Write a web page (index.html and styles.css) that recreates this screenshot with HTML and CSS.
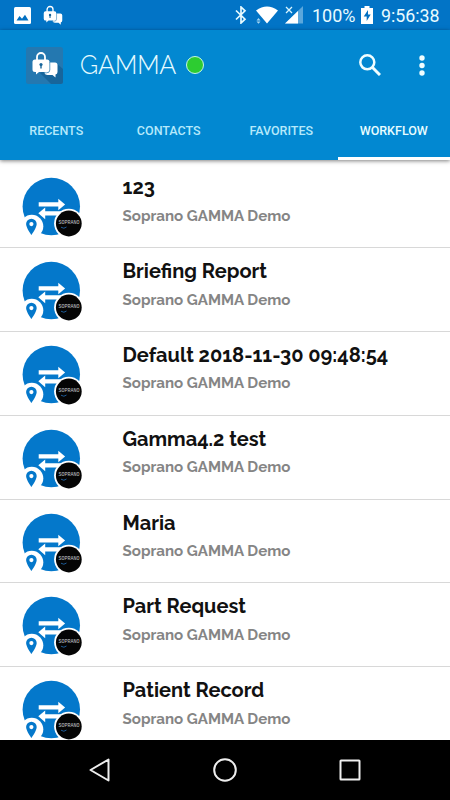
FILE: index.html
```html
<!DOCTYPE html>
<html lang="en">
<head>
  <meta charset="UTF-8">
  <meta name="viewport" content="width=device-width, initial-scale=1.0">
  <title>GAMMA</title>
  <link rel="stylesheet" href="styles.css">
</head>
<body>
  <svg class="symbols">
    <symbol id="lock-chat" viewBox="0 0 26 27">
      <path d="M5 10V6a4 4 0 0 1 8 0v4" fill="none" stroke="#fff" stroke-width="1.8"/>
      <path d="M15 11.500h8q2.500 0 2.500 2.500v7q0 2-2 2.500v3l-3-2.500h-5q-2.500 0-3-2z" fill="#fff"/>
      <path d="M3 8.500h12q2.500 0 2.500 2.500v7.500q0 2.500-2.500 2.500H7l-3 2.500V21H3q-2.500 0-2.500-2.500V11Q.500 8.500 3 8.500z" fill="#fff"/>
      <path d="M17.800 11v8q0 2.800-3 2.800h-3" fill="none" stroke="#3583b5" stroke-width=".8"/>
      <circle cx="9" cy="13.500" r="1.600" fill="#17659b"/>
      <path d="M8.300 14h1.400v3.500H8.300z" fill="#17659b"/>
    </symbol>
    <symbol id="workflow" viewBox="0 0 64 64">
      <circle cx="31.300" cy="30.500" r="28.700" fill="#0478cb"/>
      <path d="M18.700 26.200h19.600v-3.500l6.800 5.700-6.800 5.800v-3.600H18.700z" fill="#fff"/>
      <path d="M45 35.200H25.200v-3.800l-6.900 5.900 6.900 5.900v-3.700H45z" fill="#fff"/>
      <circle cx="11.800" cy="50.300" r="11.500" fill="#fff"/>
      <path fill-rule="evenodd" d="M11.400 42.800a5.300 5.300 0 0 1 5.300 5.300c0 3.800-5.300 11-5.300 11s-5.300-7.200-5.300-11a5.300 5.300 0 0 1 5.300-5.300zm0 3.200a2.100 2.100 0 1 0 0 4.200 2.100 2.100 0 0 0 0-4.200z" fill="#0478cb"/>
      <circle cx="48.800" cy="47.500" r="14.700" fill="#fff"/>
      <circle cx="48.800" cy="47.500" r="12.900" fill="#050505"/>
      <path d="M41 51.200q3 2.200 5.500-.2" fill="none" stroke="#1d5b96" stroke-width="1"/>
    </symbol>
  </svg>

  <div class="status-bar">
    <svg class="picture" viewBox="0 0 17 17">
      <rect width="17" height="17" rx="1.500" fill="#fff"/>
      <path d="M2.500 13.500l3-4.500 2.500 2.800 3-4 3.500 5.700z" fill="#0270c2"/>
    </svg>
    <svg class="lock"><use href="#lock-chat"/></svg>
    <svg class="bluetooth" viewBox="0 0 12 18">
      <path d="M1 4.500l9 8.700L6 17V1l4 3.800-9 8.700" fill="none" stroke="#e8fbff" stroke-width="1.700"/>
    </svg>
    <svg class="wifi" viewBox="0 0 22 18">
      <path d="M0 4.500Q11-3.500 22 4.500L11 17.500z" fill="#fff"/>
      <path d="M.500 14.500L2.500 12l2 2.500zM.500 15.500h4l-2 2.200z" fill="#a9d8f2"/>
    </svg>
    <svg class="signal" viewBox="0 0 18 18">
      <path d="M18 0v17.500H0z" fill="#5ba7dc"/>
      <path d="M13 5v12.500H0z" fill="#fff"/>
      <path d="M1 1l6 6M7 1L1 7" stroke="#d8f5ff" stroke-width="1.300"/>
    </svg>
    <span class="percent">100%</span>
    <svg class="battery" viewBox="0 0 12 18">
      <path d="M3.500 0h5v2H12v16H0V2h3.500z" fill="#fff"/>
      <path d="M7 4L2.700 10.500h3V15l4-6.500H7z" fill="#0270c2"/>
    </svg>
    <span class="clock">9:56:38</span>
  </div>

  <header class="header">
    <div class="toolbar">
      <svg class="logo" viewBox="0 0 37 37">
        <rect width="37" height="37" rx="2.500" fill="#2478b0"/>
        <path d="M14 26l11 11h9.500q2.500 0 2.500-2.500V22l-7-6z" fill="#17659b"/>
        <use href="#lock-chat" x="6" y="4" width="26" height="27"/>
      </svg>
      <h1>GAMMA</h1>
      <span class="online"></span>
      <svg class="search" viewBox="0 0 22 22">
        <circle cx="8.300" cy="8.300" r="7" fill="none" stroke="#effdff" stroke-width="2.500"/>
        <path d="M13.500 13.500l7.500 7.500" stroke="#effdff" stroke-width="3"/>
      </svg>
      <svg class="more" viewBox="0 0 6 21">
        <circle cx="3" cy="3" r="2.700" fill="#effdff"/>
        <circle cx="3" cy="10.500" r="2.700" fill="#effdff"/>
        <circle cx="3" cy="18" r="2.700" fill="#effdff"/>
      </svg>
    </div>
    <nav class="tabs">
      <a class="tab">RECENTS</a>
      <a class="tab">CONTACTS</a>
      <a class="tab">FAVORITES</a>
      <a class="tab active">WORKFLOW</a>
    </nav>
  </header>

  <main class="list">
    <div class="row">
      <div class="avatar"><svg><use href="#workflow"/></svg><span class="brand">SOPRANO</span></div>
      <div class="info"><h2>123</h2><p>Soprano GAMMA Demo</p></div>
    </div>
    <div class="row">
      <div class="avatar"><svg><use href="#workflow"/></svg><span class="brand">SOPRANO</span></div>
      <div class="info"><h2>Briefing Report</h2><p>Soprano GAMMA Demo</p></div>
    </div>
    <div class="row">
      <div class="avatar"><svg><use href="#workflow"/></svg><span class="brand">SOPRANO</span></div>
      <div class="info"><h2>Default 2018-11-30 09:48:54</h2><p>Soprano GAMMA Demo</p></div>
    </div>
    <div class="row">
      <div class="avatar"><svg><use href="#workflow"/></svg><span class="brand">SOPRANO</span></div>
      <div class="info"><h2>Gamma4.2 test</h2><p>Soprano GAMMA Demo</p></div>
    </div>
    <div class="row">
      <div class="avatar"><svg><use href="#workflow"/></svg><span class="brand">SOPRANO</span></div>
      <div class="info"><h2>Maria</h2><p>Soprano GAMMA Demo</p></div>
    </div>
    <div class="row">
      <div class="avatar"><svg><use href="#workflow"/></svg><span class="brand">SOPRANO</span></div>
      <div class="info"><h2>Part Request</h2><p>Soprano GAMMA Demo</p></div>
    </div>
    <div class="row">
      <div class="avatar"><svg><use href="#workflow"/></svg><span class="brand">SOPRANO</span></div>
      <div class="info"><h2>Patient Record</h2><p>Soprano GAMMA Demo</p></div>
    </div>
  </main>

  <footer class="nav-bar">
    <svg viewBox="0 0 24 24"><path d="M20.500 1.500v21L2.500 12z" fill="none" stroke="#eee" stroke-width="2" stroke-linejoin="round"/></svg>
    <svg viewBox="0 0 24 24"><circle cx="12" cy="12" r="10.800" fill="none" stroke="#eee" stroke-width="2"/></svg>
    <svg viewBox="0 0 24 24"><rect x="2.500" y="2.500" width="19" height="19" rx=".5" fill="none" stroke="#eee" stroke-width="2"/></svg>
  </footer>
</body>
</html>
```

FILE: styles.css
```css
* {
  box-sizing: border-box;
  margin: 0;
  padding: 0;
}
body {
  height: 800px;
  display: flex;
  flex-direction: column;
  overflow: hidden;
  background: #fff;
  font-family: Raleway, Lato, sans-serif;
}
svg {
  display: block;
  flex: none;
}
.symbols {
  width: 0;
  height: 0;
}
.status-bar {
  height: 30px;
  flex: none;
  display: flex;
  align-items: center;
  padding-left: 14px;
  background: #0274c6;
  color: #e8fbff;
  font-family: Roboto, sans-serif;
  font-size: 18px;
}
.picture {
  width: 17px;
  height: 17px;
}
.lock {
  width: 20px;
  height: 20px;
  margin-left: 12px;
}
.bluetooth {
  width: 12px;
  height: 18px;
  margin-left: 172px;
}
.wifi {
  width: 22px;
  height: 18px;
  margin-left: 9px;
}
.signal {
  width: 18px;
  height: 18px;
  margin-left: 7px;
}
.percent {
  width: 49px;
  margin: 1px 0 0 9px;
}
.battery {
  width: 12px;
  height: 18px;
}
.clock {
  margin: 1px 0 0 8px;
  font-size: 17.8px;
}
.header {
  height: 130px;
  flex: none;
  background: #0288d1;
  box-shadow: 0 1px 4px rgba(0, 0, 0, 0.5);
  z-index: 1;
}
.toolbar {
  height: 70px;
  display: flex;
  align-items: center;
  padding-left: 26px;
}
.logo {
  width: 37px;
  height: 37px;
}
h1 {
  width: 97px;
  margin-left: 17px;
  color: #e6fbff;
  font-size: 25.3px;
  font-weight: 300;
  letter-spacing: -0.1px;
  line-height: 30px;
}
.online {
  width: 18px;
  height: 18px;
  margin-left: 9px;
  border: 1.5px solid #c5f5e5;
  border-radius: 50%;
  background: #2dcc31;
}
.search {
  width: 22px;
  height: 22px;
  margin-left: 155px;
}
.more {
  width: 6px;
  height: 21px;
  margin-left: 38px;
}
.tabs {
  height: 60px;
  display: grid;
  grid-template-columns: repeat(4, 1fr);
}
.tab {
  border-bottom: 3px solid transparent;
  color: #b5e9fb;
  font-family: Roboto, sans-serif;
  font-size: 12.5px;
  font-weight: 500;
  line-height: 61px;
  text-align: center;
  height: 60px;
}
.tab.active {
  border-color: #fff;
  color: #e9fdff;
}
.list {
  flex: 1;
  min-height: 0;
  overflow: hidden;
  padding-top: 4.4px;
}
.row {
  height: 83.8px;
  display: flex;
  padding: 12px 0 0 20px;
  border-bottom: 1.5px solid #d8d8d8;
}
.avatar {
  position: relative;
  width: 64px;
  height: 64px;
}
.avatar svg {
  width: 64px;
  height: 64px;
}
.brand {
  position: absolute;
  left: 37px;
  top: 43px;
  width: 24px;
  color: #c4c7cb;
  font-family: "Liberation Mono", monospace;
  font-size: 5px;
  line-height: 8px;
  text-align: center;
}
.info {
  margin-left: 38.5px;
  white-space: nowrap;
}
h2 {
  margin-top: -2px;
  color: #111;
  font-size: 20px;
  font-weight: 700;
  line-height: 26px;
}
.info p {
  margin-top: 4.5px;
  color: #858585;
  font-size: 15.1px;
  font-weight: 700;
  line-height: 23px;
}
.nav-bar {
  height: 60px;
  flex: none;
  display: flex;
  align-items: center;
  justify-content: center;
  gap: 101px;
  background: #000;
}
.nav-bar svg {
  width: 24px;
  height: 24px;
}
```
